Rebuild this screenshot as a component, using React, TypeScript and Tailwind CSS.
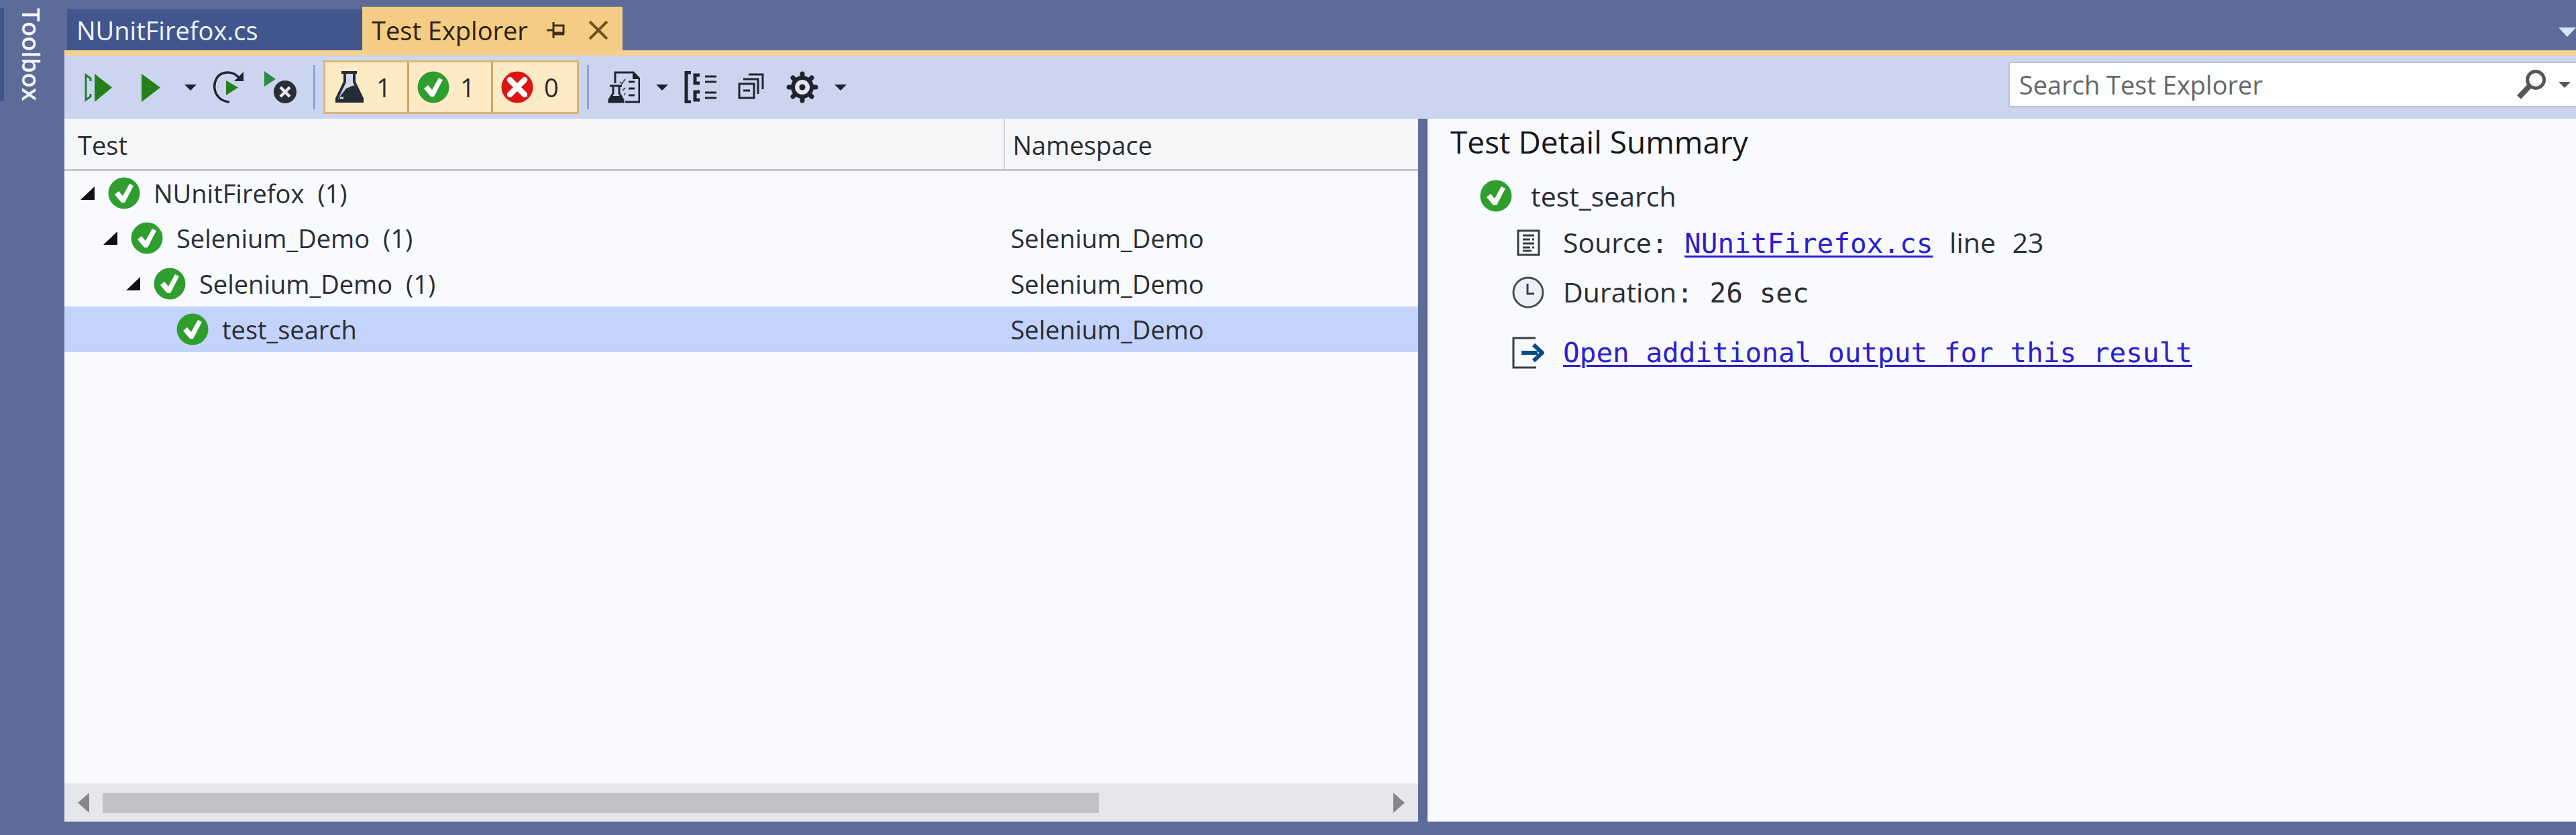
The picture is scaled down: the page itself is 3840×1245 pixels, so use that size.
import type { ReactNode } from 'react'

type TestRow = {
  name: string
  count?: number
  namespace: string
  indent: string
  selected?: boolean
}

const rows: TestRow[] = [
  { name: 'NUnitFirefox', count: 1, namespace: '', indent: 'pl-6' },
  { name: 'Selenium_Demo', count: 1, namespace: 'Selenium_Demo', indent: 'pl-[58px]' },
  { name: 'Selenium_Demo', count: 1, namespace: 'Selenium_Demo', indent: 'pl-[92px]' },
  { name: 'test_search', namespace: 'Selenium_Demo', indent: 'pl-[126px]', selected: true },
]

function Icon({ children }: { children: ReactNode }) {
  return (
    <svg viewBox="0 0 48 48" className="size-12 shrink-0" fill="none" aria-hidden="true">
      {children}
    </svg>
  )
}

function PassedIcon() {
  return (
    <Icon>
      <circle cx="24" cy="24" r="23.5" fill="#2f9e2f" />
      <path d="M10 26l6-5 6 7L32 10l6 3-13 25h-5z" fill="#fff" />
    </Icon>
  )
}

function FailedIcon() {
  return (
    <Icon>
      <circle cx="24" cy="24" r="23.5" fill="#dd1414" />
      <path d="M13 13l22 22M35 13L13 35" stroke="#fff" strokeWidth="8.5" strokeLinecap="round" />
    </Icon>
  )
}

function FlaskIcon() {
  return (
    <Icon>
      <path d="M16 3h16v13l12 24v6H3v-6l13-24z" fill="#d3d9ea" />
      <path d="M12 2h23M17 3v13L5 41v4h38v-4L31 16V3" stroke="#252b36" strokeWidth="4" />
      <path d="M19 26l7-3 5-2 12 22-2 3H6l2-6z" fill="#252b36" />
      <path d="M10 40h5" stroke="#d3d9ea" strokeWidth="3" />
    </Icon>
  )
}

function RunAllIcon() {
  return (
    <Icon>
      <path d="M12 15V11L5 6v37l7-5v-4" stroke="#2c7a35" strokeWidth="3" />
      <path d="M18 4l26 20.5L18 46z" fill="#267f1a" />
    </Icon>
  )
}

function RunIcon() {
  return (
    <Icon>
      <path d="M12 4l28 20.5L12 46z" fill="#267f1a" />
    </Icon>
  )
}

function RepeatRunIcon() {
  return (
    <Icon>
      <path d="M24 46C-4 44-4 8 15 3c10-3 19 1 25 9" stroke="#20242e" strokeWidth="3.5" />
      <path d="M45 1v14H31z" fill="#20242e" />
      <path d="M19 14l18 10.5L19 36z" fill="#267f1a" />
    </Icon>
  )
}

function CancelRunIcon() {
  return (
    <Icon>
      <path d="M0 0l17 12L0 23z" fill="#2f8a4c" />
      <circle cx="31" cy="31" r="17" fill="#2b2d36" />
      <path d="M24 24l14 14M38 24L24 38" stroke="#e8e8ee" strokeWidth="4.5" />
    </Icon>
  )
}

function PlaylistIcon() {
  return (
    <Icon>
      <path d="M11 18V2h27l9 9v35H26" stroke="#20242e" strokeWidth="3" />
      <path d="M37 1v11h10z" fill="#20242e" />
      <path d="M31 16h9M31 26h9M31 36h9" stroke="#20242e" strokeWidth="3" />
      <path d="M18 16l3 3 5-7M22 29l4-4M24 36l2-3" stroke="#4f566b" strokeWidth="2" />
      <path d="M3 22h18M8 23v10L2 43v3h21v-3l-6-10V23" stroke="#20242e" strokeWidth="3" />
      <path d="M5 37h14l4 9H1z" fill="#20242e" />
    </Icon>
  )
}

function GroupByIcon() {
  return (
    <Icon>
      <path d="M10 2H3v44h7" stroke="#20242e" strokeWidth="5" />
      <path d="M23 6h-7v12h7M23 31h-7v12h7" stroke="#20242e" strokeWidth="5" />
      <path d="M31 8h17M31 16h17M31 32h17M31 40h17" stroke="#20242e" strokeWidth="3" />
    </Icon>
  )
}

function CollapseAllIcon() {
  return (
    <Icon>
      <path d="M6 19h22v21H6zM12 12h22v22M20 5h21v22" stroke="#20242e" strokeWidth="3" />
      <path d="M12 29h10" stroke="#20242e" strokeWidth="3" />
    </Icon>
  )
}

function GearIcon() {
  return (
    <Icon>
      <path
        d="M24 4v40M4 24h40M10 10l28 28M38 10L10 38"
        stroke="#20242e"
        strokeWidth="7"
        strokeLinecap="round"
      />
      <circle cx="24" cy="24" r="17" fill="#20242e" />
      <circle cx="24" cy="24" r="11" fill="#e3e6ee" />
      <circle cx="24" cy="24" r="4.5" fill="#20242e" />
    </Icon>
  )
}

function Caret({ className = 'text-[#1c2130]' }: { className?: string }) {
  return (
    <svg viewBox="0 0 18 9" className={`h-[9px] w-[18px] shrink-0 ${className}`} aria-hidden="true">
      <path d="M0 0h18L9 9z" fill="currentColor" />
    </svg>
  )
}

function ToolButton({ label, children }: { label: string; children: ReactNode }) {
  return (
    <button type="button" aria-label={label} className="flex h-16 shrink-0 items-center">
      {children}
    </button>
  )
}

function FilterButton({ label, count, children }: { label: string; count: number; children: ReactNode }) {
  return (
    <button
      type="button"
      aria-label={`${label}: ${count}`}
      aria-pressed="true"
      className="flex h-full w-[125px] items-center gap-4 pl-3 text-[#2a2a2a]"
    >
      {children}
      <span>{count}</span>
    </button>
  )
}

function Separator() {
  return <div className="h-[66px] w-[3px] shrink-0 bg-[#8ea3d2]" />
}

function DocumentTabs() {
  return (
    <div className="flex h-[75px] shrink-0 items-end pl-1">
      <button type="button" className="flex h-[61px] w-[440px] items-center bg-[#40568d] pl-3.5 text-[#f0f3fb]">
        NUnitFirefox.cs
      </button>
      <div className="flex h-[65px] w-[388px] items-center bg-[#f5cc84] pt-1 pl-3.5 text-[#2b2112]">
        <span>Test Explorer</span>
        <button type="button" aria-label="Pin tab" className="ml-7">
          <svg viewBox="0 0 28 26" className="h-[26px] w-7" fill="none" stroke="#3d2f1c" strokeWidth="3" aria-hidden="true">
            <path d="M0 13h10M10 1v24M10 6h15v13M10 18h16" />
            <path d="M10 18h16" strokeWidth="5" />
          </svg>
        </button>
        <button type="button" aria-label="Close tab" className="ml-[34px]">
          <svg viewBox="0 0 30 28" className="h-7 w-[30px]" fill="none" stroke="#70501f" strokeWidth="4" aria-hidden="true">
            <path d="M2 1l26 26M28 1L2 27" />
          </svg>
        </button>
      </div>
      <button type="button" aria-label="Window list" className="mb-5 ml-auto">
        <svg viewBox="0 0 26 14" className="h-3.5 w-[26px]" aria-hidden="true">
          <path d="M0 0h26L13 14z" fill="#d6e4ff" />
        </svg>
      </button>
    </div>
  )
}

function Toolbar() {
  return (
    <div className="flex h-[94px] shrink-0 items-start bg-[#ccd5f0] pt-[7px]">
      <div className="flex h-[80px] items-center pl-[27px]">
        <div className="flex items-center gap-7">
          <ToolButton label="Run all tests">
            <RunAllIcon />
          </ToolButton>
          <ToolButton label="Run">
            <RunIcon />
          </ToolButton>
          <ToolButton label="Run options">
            <Caret />
          </ToolButton>
        </div>
        <div className="flex items-center gap-7 px-[25px]">
          <ToolButton label="Repeat last run">
            <RepeatRunIcon />
          </ToolButton>
          <ToolButton label="Cancel run">
            <CancelRunIcon />
          </ToolButton>
        </div>
        <Separator />
        <div className="mx-3 flex h-[80px] divide-x-3 divide-[#d3a15c] border-3 border-[#d9b678] bg-[#fdebc6]">
          <FilterButton label="Total tests" count={1}>
            <FlaskIcon />
          </FilterButton>
          <FilterButton label="Passed tests" count={1}>
            <PassedIcon />
          </FilterButton>
          <FilterButton label="Failed tests" count={0}>
            <FailedIcon />
          </FilterButton>
        </div>
        <Separator />
        <div className="flex items-center gap-6 pl-7">
          <ToolButton label="Playlist">
            <PlaylistIcon />
          </ToolButton>
          <ToolButton label="Playlist options">
            <Caret />
          </ToolButton>
          <div className="flex items-center gap-7">
            <ToolButton label="Group by">
              <GroupByIcon />
            </ToolButton>
            <ToolButton label="Collapse all">
              <CollapseAllIcon />
            </ToolButton>
            <ToolButton label="Settings">
              <GearIcon />
            </ToolButton>
          </div>
          <ToolButton label="Settings options">
            <Caret />
          </ToolButton>
        </div>
      </div>
      <div className="mt-0.5 ml-auto flex h-[68px] w-[22.6%] items-center border-2 border-r-0 border-[#bfc3d0] bg-[#fcfdfd] pr-2 pl-3.5">
        <input
          type="text"
          aria-label="Search Test Explorer"
          placeholder="Search Test Explorer"
          className="min-w-0 flex-1 bg-transparent outline-none placeholder:text-[#666]"
        />
        <button type="button" aria-label="Search">
          <svg viewBox="0 0 44 44" className="size-11" fill="none" stroke="#55565a" aria-hidden="true">
            <circle cx="28" cy="15" r="12.5" strokeWidth="5" />
            <path d="M19 24L3 41" strokeWidth="8" />
          </svg>
        </button>
        <button type="button" aria-label="Search options" className="ml-[18px]">
          <Caret className="text-[#55565a]" />
        </button>
      </div>
    </div>
  )
}

function TestTree() {
  return (
    <section className="flex w-[53.9%] shrink-0 flex-col bg-[#f8fafe]">
      <table className="w-full table-fixed border-collapse text-left text-[#2b2d33]">
        <thead>
          <tr className="h-[76px] border-b-3 border-[#c6c8cd] bg-[#f5f6f7]">
            <th className="w-[69.4%] border-r-2 border-[#d4d5d9] pt-1 pl-5 font-normal">Test</th>
            <th className="pt-1 pl-3 font-normal">Namespace</th>
          </tr>
        </thead>
        <tbody>
          {rows.map((row, i) => (
            <tr key={i} className={row.selected ? 'h-[68px] bg-[#c3d3fb]' : 'h-[68px]'}>
              <td className={row.indent}>
                <div className="flex items-center">
                  <span className="mr-5 w-[21px]">
                    {row.count !== undefined && (
                      <svg viewBox="0 0 21 20" className="h-5 w-[21px]" aria-hidden="true">
                        <path d="M21 0v20H0z" fill="#111" />
                      </svg>
                    )}
                  </span>
                  <PassedIcon />
                  <span className="ml-5">{row.name}</span>
                  {row.count !== undefined && <span className="ml-5">({row.count})</span>}
                </div>
              </td>
              <td className="pl-2.5">{row.namespace}</td>
            </tr>
          ))}
        </tbody>
      </table>
      <div className="mt-auto flex h-[57px] items-center bg-[#e6e7eb] px-5">
        <button type="button" aria-label="Scroll left">
          <svg viewBox="0 0 17 30" className="h-[30px] w-[17px]" aria-hidden="true">
            <path d="M17 0v30L0 15z" fill="#85868b" />
          </svg>
        </button>
        <div className="mx-5 h-[30px] flex-1">
          <div className="h-full w-[78%] bg-[#c1c2c8]" />
        </div>
        <button type="button" aria-label="Scroll right">
          <svg viewBox="0 0 17 30" className="h-[30px] w-[17px]" aria-hidden="true">
            <path d="M0 0v30l17-15z" fill="#85868b" />
          </svg>
        </button>
      </div>
    </section>
  )
}

function Mono({ children }: { children: ReactNode }) {
  return <span className="font-['DejaVu_Sans_Mono',monospace]">{children}</span>
}

function OutputLink({ href, children }: { href: string; children: ReactNode }) {
  return (
    <a
      href={href}
      className="font-['DejaVu_Sans_Mono',monospace] text-[#2a1fd0] underline decoration-3 underline-offset-4"
    >
      {children}
    </a>
  )
}

function DetailSummary() {
  return (
    <section className="ml-3.5 flex-1 bg-[#f8fafe] pl-[34px] text-[41px] text-[#2b2d33]">
      <h2 className="pt-1 pb-[18px] text-[46px] leading-[60px] font-medium text-[#16181d]">Test Detail Summary</h2>
      <div className="flex h-[66px] items-center gap-7 pl-11">
        <PassedIcon />
        <span>test_search</span>
      </div>
      <div className="pl-[92px]">
        <div className="flex h-[74px] items-center gap-7">
          <Icon>
            <path d="M9 6h31v36H9z" stroke="#3a3c44" strokeWidth="3" />
            <path d="M16 13h17M16 19h11M30 19h3M16 25h17M16 31h11M30 31h3M16 36h13" stroke="#3a3c44" strokeWidth="3" />
          </Icon>
          <p className="whitespace-pre">
            Source
            <Mono>{': '}</Mono>
            <OutputLink href="#source">NUnitFirefox.cs</OutputLink>
            <Mono> </Mono>
            line
            <Mono> </Mono>
            23
          </p>
        </div>
        <div className="flex h-[74px] items-center gap-7">
          <Icon>
            <circle cx="24" cy="24" r="22" fill="#eef0f8" stroke="#4b4d55" strokeWidth="3" />
            <path d="M23 11v15h10" stroke="#3a3c44" strokeWidth="3" />
          </Icon>
          <p className="whitespace-pre">
            Duration
            <Mono>: 26 sec</Mono>
          </p>
        </div>
        <div className="mt-4 flex h-[74px] items-center gap-7">
          <Icon>
            <path d="M35 2H2v44h34" stroke="#3a3c44" strokeWidth="3" />
            <path d="M14 24h24" stroke="#0b4a86" strokeWidth="6" />
            <path d="M32 12l13 12-13 12" stroke="#0b4a86" strokeWidth="6" />
          </Icon>
          <OutputLink href="#output">Open additional output for this result</OutputLink>
        </div>
      </div>
    </section>
  )
}

export default function App() {
  return (
    <div className="flex min-h-screen bg-[#5d6b99] pb-5 font-['Open_Sans',sans-serif] text-[38px] leading-[52px]">
      <aside className="w-24 shrink-0 pt-3">
        <button
          type="button"
          className="flex w-full items-end border-l-6 border-[#40568d] pl-3.5 text-[36px] font-semibold text-[#f4f6fc] [writing-mode:vertical-rl]"
        >
          Toolbox
        </button>
      </aside>
      <div className="flex min-w-0 flex-1 flex-col">
        <DocumentTabs />
        <div className="h-2 shrink-0 bg-[#f3d08f]" />
        <Toolbar />
        <main className="flex flex-1">
          <TestTree />
          <DetailSummary />
        </main>
      </div>
    </div>
  )
}
